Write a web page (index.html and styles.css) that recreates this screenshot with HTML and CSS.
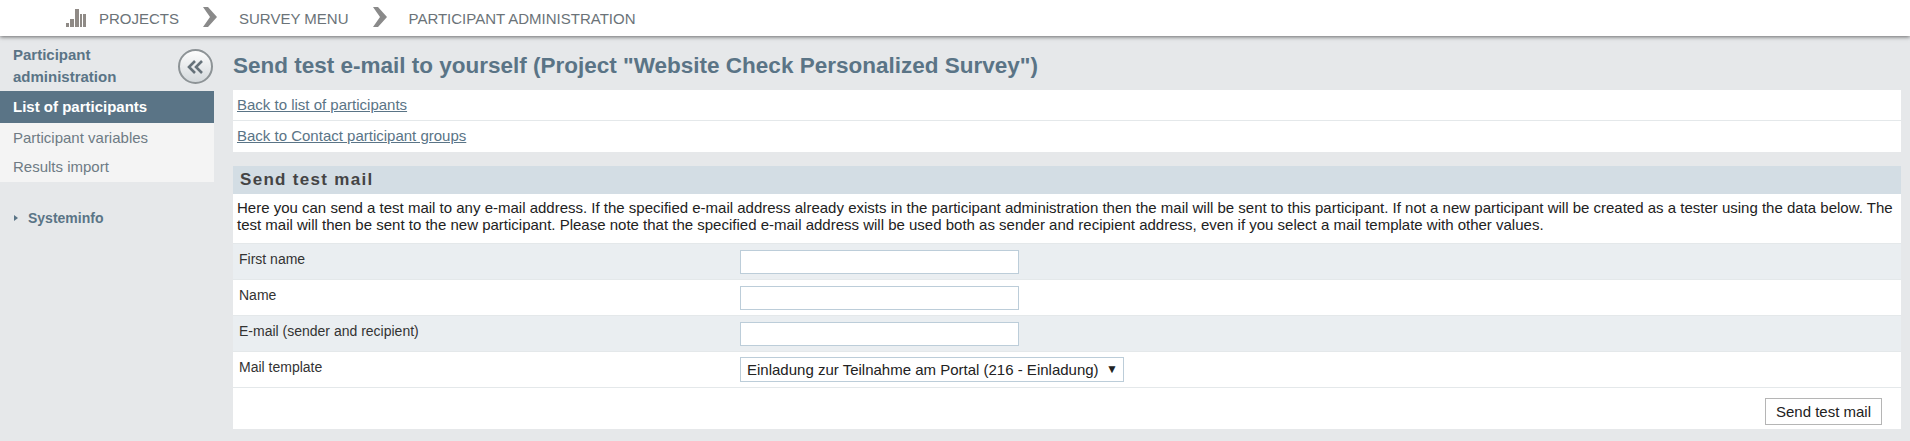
FILE: index.html
```html
<!DOCTYPE html>
<html lang="en">
<head>
<meta charset="utf-8">
<title>Send test e-mail</title>
<link rel="stylesheet" href="styles.css">
</head>
<body>
<header class="topbar">
  <svg class="bars" width="20" height="18" viewBox="0 0 20 18"><path d="M0 14h3v4H0zM4 10h4v8H4zM9 0h4v18H9zM14 5h2v13h-2zM17 5h3v13h-3z" fill="#8f8a86"/></svg>
  <span class="crumb">PROJECTS</span>
  <svg class="chev" width="14" height="20" viewBox="0 0 14 20"><path d="M0 0h5l9 10-9 10H0l7-10z" fill="#8a8a8a"/></svg>
  <span class="crumb">SURVEY MENU</span>
  <svg class="chev" width="14" height="20" viewBox="0 0 14 20"><path d="M0 0h5l9 10-9 10H0l7-10z" fill="#8a8a8a"/></svg>
  <span class="crumb">PARTICIPANT ADMINISTRATION</span>
</header>
<div class="layout">
  <aside class="sidebar">
    <div class="side-head">
      <div class="side-title">Participant administration</div>
      <div class="collapse"><svg width="20" height="16" viewBox="0 0 20 16"><path d="M9 2 3 8l6 6M16 2l-6 6 6 6" fill="none" stroke="#66727a" stroke-width="2.6"/></svg></div>
    </div>
    <nav class="side-nav">
      <a class="side-item active">List of participants</a>
      <a class="side-item">Participant variables</a>
      <a class="side-item">Results import</a>
    </nav>
    <div class="sysinfo"><span class="tri"></span>Systeminfo</div>
  </aside>
  <main class="main">
    <h1 class="title">Send test e-mail to yourself (Project "Website Check Personalized Survey")</h1>
    <div class="links">
      <div class="link-row"><a class="link">Back to list of participants</a></div>
      <div class="link-row"><a class="link">Back to Contact participant groups</a></div>
    </div>
    <section class="panel">
      <h2 class="panel-head">Send test mail</h2>
      <p class="intro">Here you can send a test mail to any e-mail address. If the specified e-mail address already exists in the participant administration then the mail will be sent to this participant. If not a new participant will be created as a tester using the data below. The test mail will then be sent to the new participant. Please note that the specified e-mail address will be used both as sender and recipient address, even if you select a mail template with other values.</p>
      <div class="row alt"><label class="lbl">First name</label><input class="field" type="text"></div>
      <div class="row"><label class="lbl">Name</label><input class="field" type="text"></div>
      <div class="row alt"><label class="lbl">E-mail (sender and recipient)</label><input class="field" type="text"></div>
      <div class="row"><label class="lbl">Mail template</label><div class="select">Einladung zur Teilnahme am Portal (216 - Einladung)<span class="caret">▼</span></div></div>
      <div class="actions"><button class="btn" type="button">Send test mail</button></div>
    </section>
  </main>
</div>
</body>
</html>
```
FILE: styles.css
```css
* { box-sizing: border-box; }
html, body { height: 100%; }
body { margin: 0; background: #e6e8ea; font-family: "Liberation Sans", Arial, sans-serif; font-size: 15px; color: #222; overflow: hidden; }
.topbar { height: 36px; background: #fff; display: flex; align-items: center; padding-left: 66px; box-shadow: 0 1px 4px rgba(0,0,0,.55); position: relative; }
.bars { margin-right: 13px; margin-top: -1px; }
.crumb { color: #6b7378; font-size: 15px; }
.chev { margin: -2px 22px 0 24px; }
.layout { display: flex; }
.sidebar { width: 214px; flex: none; margin-right: 19px; }
.side-head { height: 55px; display: flex; justify-content: space-between; padding: 8px 0 0 13px; }
.side-title { width: 120px; font-weight: bold; color: #5a7486; line-height: 22px; font-size: 15px; }
.collapse { width: 35px; height: 35px; border-radius: 50%; border: 2px solid #8d9396; background: linear-gradient(#fdfdfd, #d4d9dc); display: flex; align-items: center; justify-content: center; margin: 5px 1px 0 0; }
.side-nav { background: #f4f4f4; display: flex; flex-direction: column; padding-bottom: 1px; }
.side-item { height: 29px; line-height: 29px; padding-left: 13px; color: #6e7b84; }
.side-item.active { height: 32px; line-height: 32px; background: #5a7486; color: #fff; font-weight: bold; }
.sysinfo { margin-top: 28px; padding-left: 14px; font-size: 14px; font-weight: bold; color: #5a7486; display: flex; align-items: center; }
.tri { width: 0; height: 0; border-left: 4px solid #5a7486; border-top: 3px solid transparent; border-bottom: 3px solid transparent; margin-right: 10px; }
.main { width: 1668px; }
.title { margin: 0; height: 54px; padding-top: 16px; font-size: 22.5px; line-height: 28px; color: #5a7486; font-weight: bold; }
.links { background: #fff; }
.link-row { height: 31px; line-height: 30px; padding-left: 4px; border-bottom: 1px solid #e4e8ea; }
.link-row:last-child { border-bottom: 0; }
.link { color: #5a7486; text-decoration: underline; }
.panel { margin-top: 14px; background: #fff; }
.panel-head { margin: 0; height: 28px; line-height: 28px; background: #d3dde4; padding-left: 7px; font-size: 17px; letter-spacing: 1.3px; color: #444; }
.intro { margin: 0; padding: 5px 4px 0; height: 49px; line-height: 17px; color: #222; }
.row { height: 36px; display: flex; align-items: center; border-top: 1px solid #e4e8ea; padding-left: 6px; }
.row.alt { background: #eaeef1; }
.lbl { width: 501px; flex: none; margin-top: -6px; color: #333; font-size: 14px; }
.field { width: 279px; height: 24px; border: 1px solid #bccdd9; background: #fff; margin: 0; }
.select { height: 25px; width: 384px; border: 1px solid #bccdd9; background: #fff; line-height: 23px; padding-left: 6px; color: #222; display: flex; justify-content: space-between; }
.caret { font-size: 12px; margin-right: 5px; }
.actions { height: 42px; border-top: 1px solid #e4e8ea; display: flex; justify-content: flex-end; align-items: flex-start; padding: 10px 19px 0 0; }
.btn { width: 117px; height: 27px; border: 1px solid #b5b5b5; background: #fff; font: 15px "Liberation Sans", Arial, sans-serif; color: #222; padding: 0; }
```
